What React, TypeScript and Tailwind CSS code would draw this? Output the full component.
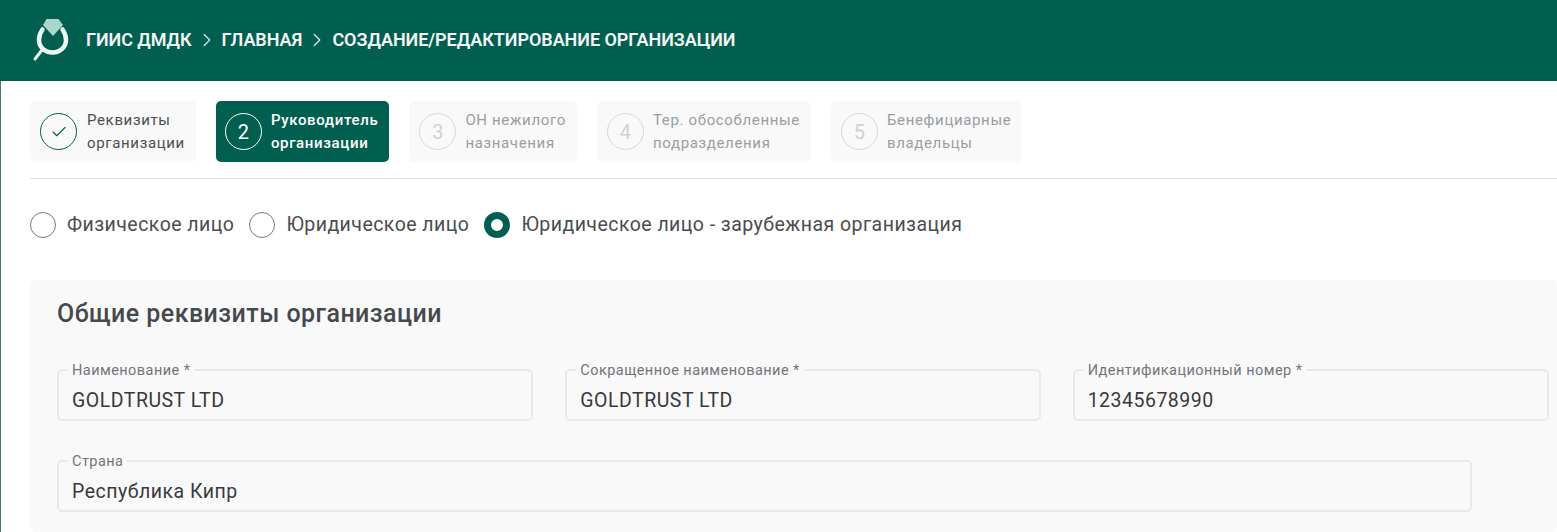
import React from "react";
import { ChevronRight, Check } from "lucide-react";

const Logo = () => (
  <svg width="38" height="44" viewBox="0 0 38 44" fill="none">
    <path d="M14.500 1h12l4.500 6L21 18 11 7z" fill="#a9d6cd" />
    <path
      d="M10.500 11.500C8 15 7 18.500 7 22c0 7 5.800 12.500 13.500 12.500S34 29 34 22c0-3.500-1-7-3.500-10.500"
      stroke="#eef6f4"
      strokeWidth="4.5"
      strokeLinecap="round"
    />
    <path d="M10 32 3 41" stroke="#eef6f4" strokeWidth="3" strokeLinecap="round" />
  </svg>
);

const Step = ({
  num,
  lines,
  state,
}: {
  num: number;
  lines: [string, string];
  state: "done" | "active" | "todo";
}) => {
  const box =
    state === "active"
      ? "gap-[9px] pl-[9px] pr-[11px] bg-[#015f50] text-white"
      : state === "done"
        ? "gap-[10px] pl-[10px] pr-[11px] bg-[#f9f9fa] text-[#4a4f52]"
        : "gap-[9px] pl-[10px] pr-[11px] bg-[#f9f9fa] text-[#9a9ea1]";
  const circle =
    state === "active"
      ? "border-white text-white"
      : state === "done"
        ? "border-[#015f50] text-[#015f50]"
        : "border-[#d5d7d9] text-[#cfd2d4]";
  return (
    <div className={`flex h-[61px] items-center rounded-[5px] ${box}`}>
      <div className={`flex h-[37px] w-[37px] shrink-0 items-center justify-center rounded-full border-[1.5px] text-[20px] ${circle}`}>
        {state === "done" ? <Check size={18} strokeWidth={1.5} /> : num}
      </div>
      <div className={`text-[15px] leading-[23px] tracking-[0.65px] ${state === "active" ? "font-medium" : ""}`}>
        <div>{lines[0]}</div>
        <div>{lines[1]}</div>
      </div>
    </div>
  );
};

const Radio = ({ label, checked }: { label: string; checked?: boolean }) => (
  <label className="flex items-center gap-[11px]">
    {checked ? (
      <span className="h-[26px] w-[26px] rounded-full border-[7px] border-[#015f50] bg-white" />
    ) : (
      <span className="h-[26px] w-[26px] rounded-full border-[1.5px] border-[#77797b] bg-white" />
    )}
    <span className="text-[19.5px] tracking-[0.46px] text-[#4a4d4f]">{label}</span>
  </label>
);

const Field = ({ label, value, className }: { label: string; value: string; className: string }) => (
  <fieldset className={`h-[60px] rounded-[5px] border-2 border-[#e8e9eb] pl-[9px] pr-[9px] ${className}`}>
    <legend className="px-[4px] pt-[3px] text-[14.5px] leading-[14px] tracking-[0.45px] text-[#737679]">{label}</legend>
    <div className="pl-[4px] pt-[10px] text-[19.5px] leading-[26px] tracking-[0.5px] text-[#38393b]">{value}</div>
  </fieldset>
);

export default function App() {
  return (
    <div className="h-[532px] w-[1557px] overflow-hidden bg-white font-['Roboto',sans-serif]">
      <header className="flex h-[81px] items-center bg-[#015f50] pb-[2px] pl-[32px] text-white">
        <Logo />
        <nav className="ml-[16px] flex items-center text-[18px] font-semibold tracking-[-0.05px] text-[#f3f8f7]">
          <span>ГИИС ДМДК</span>
          <ChevronRight size={22} strokeWidth={1.5} className="mx-[4px] text-[#cfe3df]" />
          <span>ГЛАВНАЯ</span>
          <ChevronRight size={22} strokeWidth={1.5} className="mx-[4px] text-[#cfe3df]" />
          <span>СОЗДАНИЕ/РЕДАКТИРОВАНИЕ ОРГАНИЗАЦИИ</span>
        </nav>
      </header>

      <main className="h-[451px] border-l border-[#3d7a6e] pl-[29px]">
        <div className="flex gap-[20px] border-b border-[#dfe1e3] pb-[16px] pt-[20px]">
          <Step num={1} state="done" lines={["Реквизиты", "организации"]} />
          <Step num={2} state="active" lines={["Руководитель", "организации"]} />
          <Step num={3} state="todo" lines={["ОН нежилого", "назначения"]} />
          <Step num={4} state="todo" lines={["Тер. обособленные", "подразделения"]} />
          <Step num={5} state="todo" lines={["Бенефициарные", "владельцы"]} />
        </div>

        <div className="flex h-[101px] items-center gap-[15px] pb-[9px]">
          <Radio label="Физическое лицо" />
          <Radio label="Юридическое лицо" />
          <Radio label="Юридическое лицо - зарубежная организация" checked />
        </div>

        <section className="h-[252px] rounded-[6px] bg-[#f9f9fa] pl-[27px] pr-[8px] pt-[18px]">
          <h2 className="text-[25px] font-medium leading-[32px] tracking-[0.45px] text-[#45494c]">Общие реквизиты организации</h2>
          <div className="mt-[31px] flex gap-[32px]">
            <Field className="w-[477px]" label="Наименование *" value="GOLDTRUST LTD" />
            <Field className="w-[476px]" label="Сокращенное наименование *" value="GOLDTRUST LTD" />
            <Field className="w-[477px]" label="Идентификационный номер *" value="12345678990" />
          </div>
          <Field className="mt-[31px] w-[1415px]" label="Страна" value="Республика Кипр" />
        </section>
      </main>
    </div>
  );
}
